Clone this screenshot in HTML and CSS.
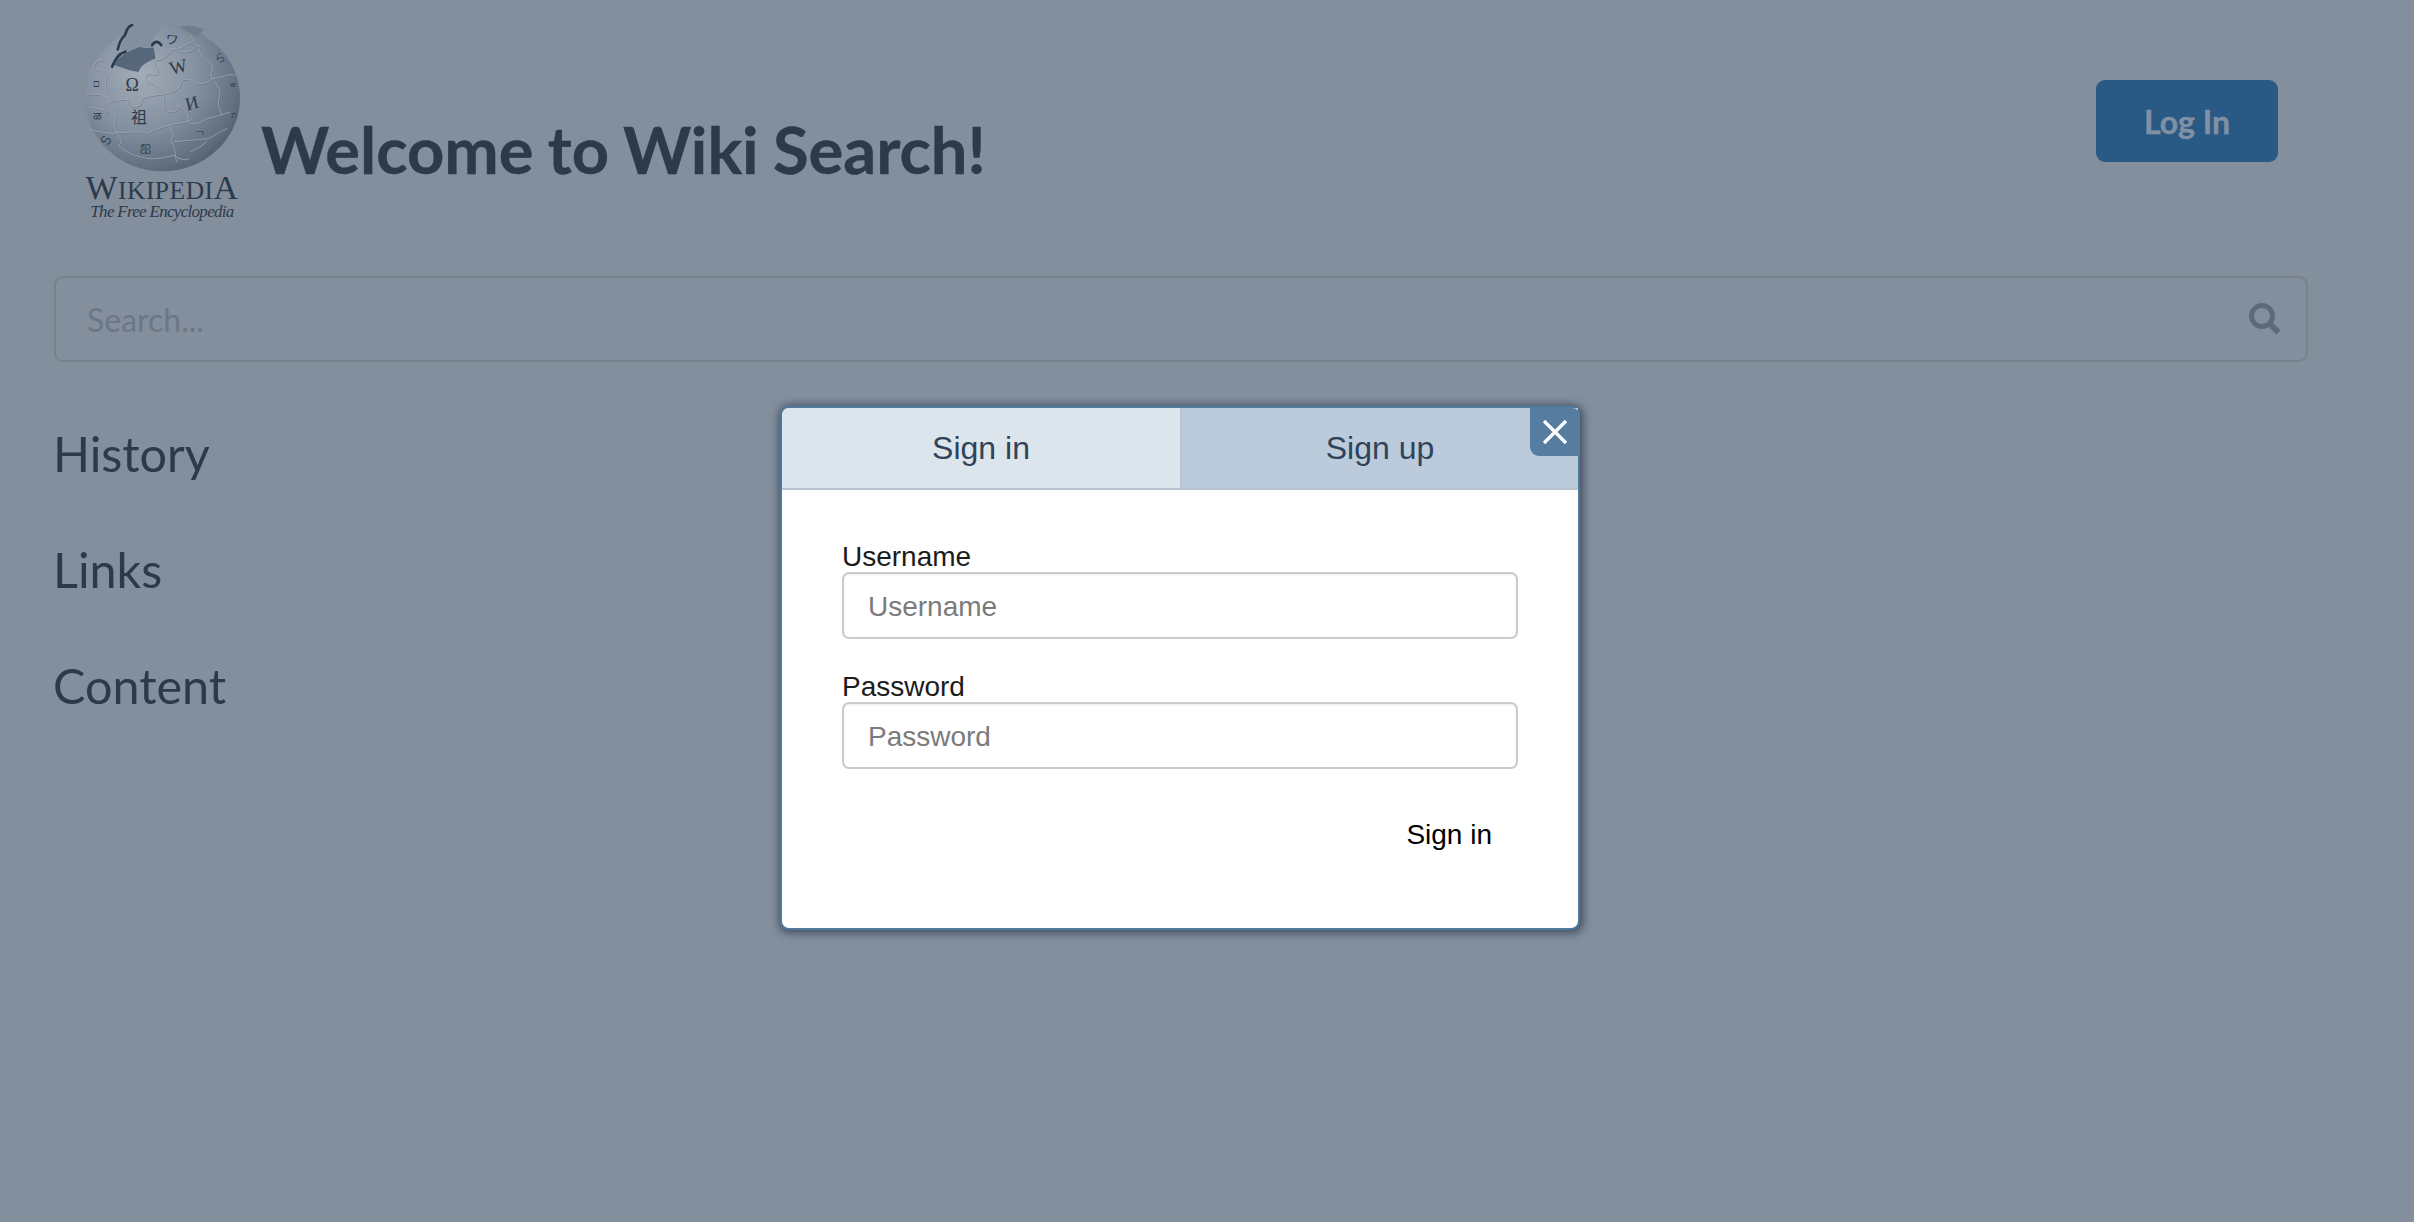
FILE: index.html
```html
<!DOCTYPE html>
<html lang="en">
<head>
  <meta charset="UTF-8">
  <title>Wiki Search</title>
  <link rel="stylesheet" href="styles.css">
</head>
<body>
  <!-- Page behind the dialog -->
  <header class="header">
    <div class="logo">
      <svg class="globe" viewBox="134 70 464 461" aria-hidden="true">
        <defs>
          <radialGradient id="sphere" cx="0.36" cy="0.34" r="0.75">
            <stop offset="0" stop-color="#a2acb8"/>
            <stop offset="0.5" stop-color="#8490a0"/>
            <stop offset="0.85" stop-color="#626f80"/>
            <stop offset="1" stop-color="#4f5c6d"/>
          </radialGradient>
          <g id="seams" fill="none">
            <path d="M340 190 C345 215 360 225 345 235 C320 225 305 240 320 255 C345 262 360 275 368 295 C372 325 360 335 385 345 C410 345 420 335 410 325"/>
            <path d="M140 290 C165 300 180 280 205 315 C235 310 250 305 262 310 C255 325 280 335 300 325 C305 310 290 300 368 292 C400 285 410 280 420 265 C415 250 440 240 460 255 C480 265 500 260 515 245 C540 245 560 230 585 235"/>
            <path d="M450 115 C460 130 455 145 480 150 C470 170 490 190 510 200 C525 215 505 230 515 245 C530 265 545 285 535 305 C530 330 540 340 545 355"/>
            <path d="M345 190 C370 190 385 170 395 155 C415 160 425 150 455 135 M385 155 C420 165 445 175 465 150"/>
            <path d="M205 315 C215 350 235 360 220 385 C230 420 255 430 235 445 C250 465 290 480 305 480 M220 405 C260 410 300 400 320 410 C340 400 350 395 385 385 C395 405 405 420 390 430 C410 460 400 480 410 495"/>
            <path d="M410 325 C440 340 450 355 440 370 C450 385 470 385 500 365 C525 360 540 355 570 345 M385 385 C420 375 440 380 455 365 M400 435 C430 430 470 430 500 425 C520 420 540 400 560 395"/>
            <path d="M140 330 C165 335 180 335 205 345 M150 400 C180 405 210 410 225 410 M190 190 C175 190 160 195 160 215 C180 220 190 225 205 235 C190 250 195 275 205 290"/>
            <path d="M305 480 C330 490 360 485 400 475 C420 490 440 490 445 485 M450 465 C480 450 495 440 500 430"/>
          </g>
        </defs>
        <ellipse cx="366" cy="303" rx="232" ry="220" fill="url(#sphere)"/>
        <!-- missing pieces at the top -->
        <path d="M240 155 L272 78 L360 72 L356 100 L335 130 L340 155 L300 150 L255 165 Z" fill="#838f9d"/>
        <path d="M220 205 C235 180 255 165 300 150 C320 158 335 150 340 155 L345 185 C320 195 300 205 295 225 C270 225 240 210 220 205 Z" fill="#56677a"/>
        <path d="M275 85 C250 95 265 110 245 125 C235 140 235 150 232 158 M255 165 C235 170 225 185 215 210 M335 145 C345 130 355 135 362 145" fill="none" stroke="#2c3a4b" stroke-width="8" stroke-linecap="round"/>
        <path d="M420 90 C440 85 470 85 490 100 L470 120 L440 105 Z" fill="#6f7d8d"/>
        <!-- puzzle seams -->
        <use href="#seams" stroke="#5f6c7c" stroke-width="2" transform="translate(1.5 2)"/>
        <use href="#seams" stroke="#aab3be" stroke-width="2"/>
        <!-- letters on the pieces -->
        <g fill="#2c3a4b">
          <text x="275" y="282" class="glyph" font-size="54" text-anchor="middle">Ω</text>
          <text x="418" y="228" class="glyph" font-size="56" text-anchor="middle" transform="rotate(-14 418 228)">W</text>
          <text x="458" y="336" class="glyph" font-size="54" text-anchor="middle" transform="rotate(-14 458 336)">И</text>
          <text x="296" y="378" class="glyph-cjk" font-size="48" text-anchor="middle">祖</text>
          <text x="392" y="142" class="glyph-cjk" font-size="38" text-anchor="middle" transform="rotate(8 392 142)">ワ</text>
          <text x="478" y="416" class="glyph" font-size="44" text-anchor="middle">¬</text>
          <text x="540" y="192" class="glyph" font-size="32" text-anchor="middle">ら</text>
          <text x="316" y="462" class="glyph" font-size="42" text-anchor="middle">ஐ</text>
          <text x="168" y="272" class="glyph" font-size="34" text-anchor="middle">ם</text>
          <text x="172" y="370" class="glyph" font-size="34" text-anchor="middle">ळ</text>
          <text x="190" y="438" class="glyph" font-size="36" text-anchor="middle" transform="rotate(30 190 438)">ഗ</text>
          <text x="576" y="280" class="glyph" font-size="26" text-anchor="middle">ᄒ</text>
          <text x="580" y="364" class="glyph" font-size="26" text-anchor="middle">ת</text>
        </g>
      </svg>
      <div class="wordmark"><span class="cap">W</span>IKIPEDI<span class="cap">A</span></div>
      <div class="tagline">The Free Encyclopedia</div>
    </div>
    <h1 class="title">Welcome to Wiki Search!</h1>
    <button class="login">Log In</button>
  </header>

  <div class="search">
    <span class="search-text">Search...</span>
    <svg class="search-icon" viewBox="0 0 32 32" aria-hidden="true">
      <circle cx="13" cy="13" r="10.5" fill="none" stroke="#5e6a79" stroke-width="5"/>
      <path d="M21 21 L29.5 29.5" stroke="#5e6a79" stroke-width="6" stroke-linecap="butt"/>
    </svg>
  </div>

  <nav class="menu">
    <a class="menu-item">History</a>
    <a class="menu-item">Links</a>
    <a class="menu-item">Content</a>
  </nav>

  <!-- Sign in dialog -->
  <div class="modal">
    <div class="tabs">
      <div class="tab tab-active">Sign in</div>
      <div class="tab">Sign up</div>
    </div>
    <button class="close" aria-label="Close">
      <svg viewBox="0 0 26 26"><path d="M2 2 L24 24 M24 2 L2 24" stroke="#fff" stroke-width="3.2"/></svg>
    </button>
    <form class="form">
      <label class="label" for="username">Username</label>
      <input class="field" id="username" placeholder="Username">
      <label class="label" for="password">Password</label>
      <input class="field" id="password" type="password" placeholder="Password">
      <div class="actions">
        <button class="submit" type="button">Sign in</button>
      </div>
    </form>
  </div>
</body>
</html>
```

FILE: styles.css
```css
/* Dimmed page */
body {
  margin: 0;
  min-height: 1222px;
  background-color: #838f9d;
  font-family: Lato, sans-serif;
  color: #2d3a4b;
  overflow: hidden;
}

.header {
  display: flex;
  align-items: flex-end;
  padding: 23px 136px 0 84px;
  height: 197px;
}

.logo {
  display: flex;
  flex-direction: column;
  align-items: center;
  width: 156px;
  flex: none;
  color: #2d3a4b;
}

.globe {
  width: 155px;
  height: 154px;
  display: block;
}

.glyph {
  font-family: "Liberation Serif", "DejaVu Sans", serif;
}

.glyph-cjk {
  font-family: "Noto Sans CJK SC", sans-serif;
}

.wordmark {
  font-family: "Liberation Serif", serif;
  font-size: 25.5px;
  line-height: 27px;
  letter-spacing: 0.5px;
  white-space: nowrap;
}

.cap {
  font-size: 34px;
}

.tagline {
  font-family: "Liberation Serif", serif;
  font-style: italic;
  font-size: 17px;
  line-height: 16px;
  letter-spacing: -0.7px;
  white-space: nowrap;
}

.title {
  margin: 0 0 31px 21px;
  font-size: 65px;
  line-height: 80px;
  font-weight: 700;
  word-spacing: -1.5px;
  color: #2d3a4b;
  -webkit-text-stroke: 0.4px #2d3a4b;
}

.login {
  margin: 0 0 58px auto;
  align-self: flex-end;
  width: 182px;
  height: 82px;
  border: none;
  border-radius: 9px;
  background-color: #285a85;
  color: #8290a3;
  font-family: Lato, sans-serif;
  font-size: 32px;
  font-weight: 700;
  -webkit-text-stroke: 0.4px #8290a3;
}

.search {
  display: flex;
  align-items: center;
  justify-content: space-between;
  box-sizing: border-box;
  height: 86px;
  margin: 56px 106px 0 54px;
  padding: 0 25px 0 31px;
  border: 2px solid #77828f;
  border-radius: 9px;
}

.search-text {
  font-size: 32px;
  color: #6b7786;
}

.search-icon {
  width: 32px;
  height: 32px;
}

.menu {
  display: flex;
  flex-direction: column;
  gap: 48px;
  margin: 57px 0 0 53px;
}

.menu-item {
  font-size: 48.5px;
  line-height: 68px;
  color: #2d3a4b;
}

/* Dialog */
.modal {
  position: absolute;
  top: 406px;
  left: 780px;
  box-sizing: border-box;
  width: 800px;
  height: 524px;
  border: 2px solid #4f7a9f;
  border-radius: 9px;
  background-color: #fff;
  box-shadow: 1px 1px 8px 2px rgba(20, 30, 50, 0.6);
  font-family: "Liberation Sans", Arial, sans-serif;
}

.tabs {
  display: flex;
  box-sizing: border-box;
  height: 82px;
  border-bottom: 2px solid #b8c2cc;
}

.tab {
  flex: 1;
  display: flex;
  align-items: center;
  justify-content: center;
  background-color: #bbcbdb;
  font-size: 32px;
  color: #2f4359;
}

.tab-active {
  flex: 0 0 400px;
  box-sizing: border-box;
  background-color: #dce4ec;
  border-right: 2px solid #b8c2cc;
  border-top-left-radius: 7px;
}

.close {
  position: absolute;
  top: 0;
  right: -2px;
  display: flex;
  align-items: center;
  justify-content: center;
  width: 50px;
  height: 48px;
  padding: 0;
  border: none;
  border-radius: 0 8px 0 9px;
  background-color: #567da0;
}

.close svg {
  width: 26px;
  height: 26px;
}

.form {
  display: flex;
  flex-direction: column;
  padding: 51px 60px 0 60px;
}

.label {
  margin-bottom: -1px;
  font-size: 28px;
  line-height: 32px;
  color: #1c1c1c;
}

.field {
  box-sizing: border-box;
  width: 100%;
  height: 67px;
  margin-bottom: 32px;
  padding: 2px 24px 0;
  border: 2px solid #cbcbcb;
  border-radius: 7px;
  font-family: "Liberation Sans", Arial, sans-serif;
  font-size: 28px;
  box-shadow: inset 0 1px 2px rgba(0, 0, 0, 0.08);
}

.field::placeholder {
  color: #7b7b7b;
  opacity: 1;
}

.actions {
  display: flex;
  justify-content: flex-end;
  margin-top: 4px;
}

.submit {
  padding: 14px 26px;
  border: none;
  background: none;
  font-family: "Liberation Sans", Arial, sans-serif;
  font-size: 28px;
  color: #000;
}
```
